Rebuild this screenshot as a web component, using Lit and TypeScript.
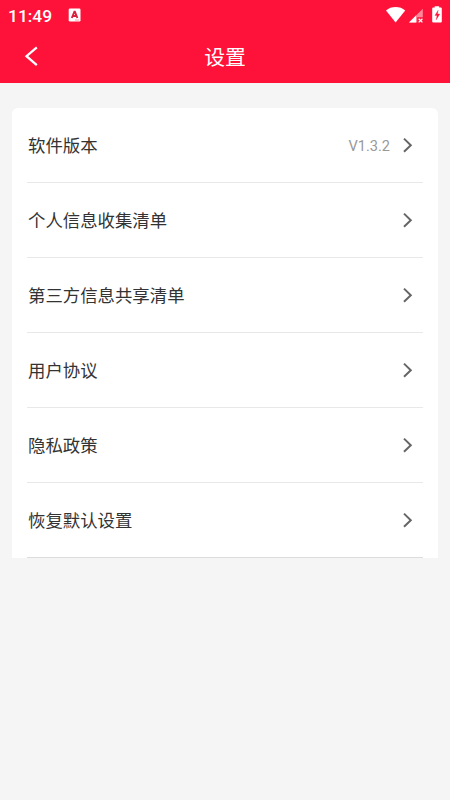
import { LitElement, html, css } from "lit";
import { customElement, property } from "lit/decorators.js";

@customElement("status-bar")
class StatusBar extends LitElement {
  static styles = css`
    :host { display: flex; align-items: center; height: 30px; padding: 0 0 0 8px; color: #fff; box-sizing: border-box; }
    .time { font: 500 17.4px/30px Roboto, sans-serif; width: 60px; padding-top: 1px; box-sizing: border-box; white-space: nowrap; }
    .app { flex: 1; display: flex; }
    svg { display: block; }
  `;
  render() {
    return html`
      <div class="time">11:49</div>
      <div class="app">
        <svg width="13" height="14" viewBox="0 0 13 14">
          <rect x="0.7" y="0.5" width="11.8" height="13" rx="1.2" fill="#fff" />
          <path d="M3.8 10 6.4 3.6h.5l2.5 6.4M4.8 8h3.7" fill="none" stroke="#d9203f" stroke-width="1.9" />
          <path d="M7 12h4" stroke="#f7a5b2" stroke-width="1" />
        </svg>
      </div>
      <svg width="64" height="30" viewBox="386 0 64 30">
        <path d="M386 10.5C391 5.9 400.2 5.9 405.2 10.5L395.6 22.4Z" fill="#fff" />
        <path d="M409 22.5 422.8 8.7V17.2H417.2V22.5Z" fill="#ff8799" />
        <path d="M409 22.5 416 15.5V22.5Z" fill="#fff" />
        <path d="M418.7 18.7l3.7 3.7m0-3.7-3.7 3.7" stroke="#fff" stroke-width="1.3" />
        <path d="M434.7 7.5V6.3h4.5v1.2h1.6q1 0 1 1v13q0 1-1 1h-7.6q-1 0-1-1v-13q0-1 1-1Z" fill="#fff" />
        <path d="M438.2 10.2 434.9 15.4h2.1l-.8 4.5 3.6-6h-2.3Z" fill="#ff1239" stroke="#ff1239" stroke-width=".3" />
      </svg>
    `;
  }
}

@customElement("setting-row")
class SettingRow extends LitElement {
  @property() label = "";
  @property() value = "";
  static styles = css`
    :host { display: flex; align-items: center; height: 75.1px; box-sizing: border-box; border-bottom: 1px solid #e8e8e8; color: #333; font: 17.4px/26px "Noto Sans CJK SC", sans-serif; }
    .label { flex: 1; padding-left: 1px; }
    .value { font: 14.6px/20px Roboto, sans-serif; color: #999; margin-right: 11px; padding-top: 2px; }
    svg { display: block; margin-right: 9.5px; }
  `;
  render() {
    return html`
      <span class="label">${this.label}</span>
      ${this.value ? html`<span class="value">${this.value}</span>` : ""}
      <svg width="12" height="16" viewBox="0 0 12 16">
        <path d="M3 1.6 9.8 8.2 3 14.8" fill="none" stroke="#666" stroke-width="2" />
      </svg>
    `;
  }
}

@customElement("app-root")
class AppRoot extends LitElement {
  static styles = css`
    :host { display: flex; flex-direction: column; height: 800px; background: #f5f5f5; }
    header { height: 82.5px; box-sizing: border-box; background: #ff1239; color: #fff; }
    nav { display: grid; grid-template-columns: 60px 1fr 60px; align-items: center; height: 52px; }
    nav svg { display: block; margin-left: 22px; }
    h1 { margin: 0; text-align: center; font: 400 20.8px/30px "Noto Sans CJK SC", sans-serif; }
    main { margin: 25px 12.5px 0 12px; padding: 0 15px; background: #fff; border-radius: 6px 6px 0 0; }
    setting-row:last-child { border-bottom-color: #dcdcdc; }
  `;
  private rows = [
    { label: "软件版本", value: "V1.3.2" },
    { label: "个人信息收集清单" },
    { label: "第三方信息共享清单" },
    { label: "用户协议" },
    { label: "隐私政策" },
    { label: "恢复默认设置" },
  ];
  render() {
    return html`
      <header>
        <status-bar></status-bar>
        <nav>
          <svg width="18" height="22" viewBox="0 0 18 22">
            <path d="M14.8 2.3 4.5 11.2 14.8 20.2" fill="none" stroke="#fff" stroke-width="2.3" />
          </svg>
          <h1>设置</h1>
        </nav>
      </header>
      <main>
        ${this.rows.map((r) => html`<setting-row .label=${r.label} .value=${r.value ?? ""}></setting-row>`)}
      </main>
    `;
  }
}
